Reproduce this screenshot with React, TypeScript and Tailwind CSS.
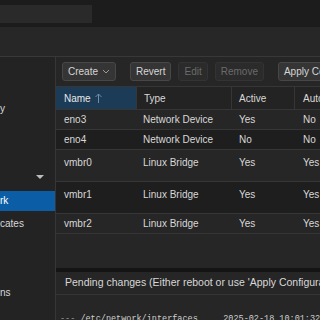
import React from 'react';

type Row = { name: string; type: string; active: string; auto: string; tall?: boolean; dark?: boolean };

const rows: Row[] = [
  { name: 'eno3', type: 'Network Device', active: 'Yes', auto: 'No' },
  { name: 'eno4', type: 'Network Device', active: 'No', auto: 'No', dark: true },
  { name: 'vmbr0', type: 'Linux Bridge', active: 'Yes', auto: 'Yes', tall: true },
  { name: 'vmbr1', type: 'Linux Bridge', active: 'Yes', auto: 'Yes', tall: true, dark: true },
  { name: 'vmbr2', type: 'Linux Bridge', active: 'Yes', auto: 'Yes' },
];

const ToolButton: React.FC<{ label: string; disabled?: boolean; caret?: boolean }> = ({ label, disabled, caret }) => (
  <button
    className={`h-[19px] px-[5px] flex items-center gap-[4px] rounded-[3px] border text-[10px] ${
      disabled ? 'bg-[#2b2b2b] border-[#333] text-[#6a6a6a]' : 'bg-[#353535] border-[#474747] text-[#d6d6d6]'
    }`}
  >
    {label}
    {caret && (
      <svg width="8" height="5" viewBox="0 0 8 5" fill="none">
        <path d="M1 1l3 3 3-3" stroke="#9a9a9a" strokeWidth="1" />
      </svg>
    )}
  </button>
);

const Sep = () => <div className="w-px h-[14px] bg-[#444]" />;

export default function App() {
  return (
    <div
      className="w-[320px] h-[320px] overflow-hidden bg-[#262626] flex flex-col text-[10px] text-[#d8d8d8]"
      style={{ fontFamily: '"Liberation Sans", Arial, sans-serif' }}
    >
      {/* top bar */}
      <div className="h-[27px] shrink-0 bg-[#1c1c1c] flex items-center">
        <div className="w-[92px] h-[18px] bg-[#2a2a2a]" />
      </div>
      {/* panel header */}
      <div className="h-[30px] shrink-0 bg-[#272727] border-b border-[#383838]" />

      <div className="flex flex-1 min-h-0">
        {/* sidebar */}
        <div className="w-[56px] shrink-0 bg-[#232323] border-r border-[#363636] flex flex-col pt-[40px] text-[10px] text-[#d8d8d8]">
          <div className="h-[23px] flex items-center">y</div>
          <div className="h-[23px]" />
          <div className="h-[23px]" />
          <div className="h-[23px] flex items-center pl-[36px]">
            <svg width="8" height="5" viewBox="0 0 8 5">
              <path d="M0 0h8L4 4z" fill="#bdbdbd" />
            </svg>
          </div>
          <div className="h-[23px] flex items-center">
            <div className="h-[20px] w-full bg-[#0b5ea6] flex items-center text-white">rk</div>
          </div>
          <div className="h-[23px] flex items-center">cates</div>
          <div className="h-[23px]" />
          <div className="h-[23px]" />
          <div className="h-[23px] flex items-center">ns</div>
        </div>

        {/* main */}
        <div className="flex-1 min-w-0 flex flex-col overflow-hidden">
          <div className="h-[29px] shrink-0 flex items-center gap-[7px] pl-[6px] whitespace-nowrap">
            <ToolButton label="Create" caret />
            <Sep />
            <ToolButton label="Revert" />
            <ToolButton label="Edit" disabled />
            <ToolButton label="Remove" disabled />
            <Sep />
            <ToolButton label="Apply Configuration" />
          </div>

          {/* table */}
          <div className="flex-1 flex flex-col min-h-0">
            <div className="h-[24px] shrink-0 flex bg-[#232323] border-y border-[#363636] whitespace-nowrap">
              <div className="w-[80px] shrink-0 bg-[#1b3b56] flex items-center gap-[4px] pl-[8px] text-[#e8e8e8]">
                Name
                <svg width="7" height="10" viewBox="0 0 7 10">
                  <path d="M3.5 1v9M0.5 4l3-3 3 3" stroke="#6b8fae" strokeWidth="1" fill="none" />
                </svg>
              </div>
              <div className="w-[95px] shrink-0 border-l border-[#363636] flex items-center pl-[7px]">Type</div>
              <div className="w-[63px] shrink-0 border-l border-[#363636] flex items-center pl-[7px]">Active</div>
              <div className="flex-1 border-l border-[#363636] flex items-center pl-[8px]">Autostart</div>
            </div>
            {rows.map((r) => (
              <div
                key={r.name}
                className={`shrink-0 flex whitespace-nowrap border-b border-[#363636] ${r.tall ? 'h-[32px] items-start pt-[5px]' : 'h-[20px] items-center'} ${
                  r.dark ? 'bg-[#1e1e1e]' : 'bg-[#262626]'
                }`}
              >
                <div className="w-[80px] shrink-0 pl-[8px]">{r.name}</div>
                <div className="w-[95px] shrink-0 pl-[7px]">{r.type}</div>
                <div className="w-[63px] shrink-0 pl-[8px]">{r.active}</div>
                <div className="flex-1 pl-[9px]">{r.auto}</div>
              </div>
            ))}
            <div className="flex-1" />
          </div>

          <div className="h-[4px] shrink-0 bg-[#141414]" />
          {/* pending changes */}
          <div className="h-[23px] shrink-0 flex items-center pl-[9px] border-b border-[#363636] whitespace-nowrap text-[10.5px]">
            Pending changes (Either reboot or use 'Apply Configuration' (needs ifupdown2) to activate)
          </div>
          <div
            className="h-[25px] shrink-0 pl-[4px] pt-[19px] whitespace-pre text-[8.5px] leading-[10px] text-[#cfcfcf]"
            style={{ fontFamily: '"Liberation Mono", monospace' }}
          >
            <span className="text-[#9a9a9a]">---</span>{' /etc/network/interfaces     2025-02-18 10:01:32.000000000 +0100'}
          </div>
        </div>
      </div>
    </div>
  );
}
